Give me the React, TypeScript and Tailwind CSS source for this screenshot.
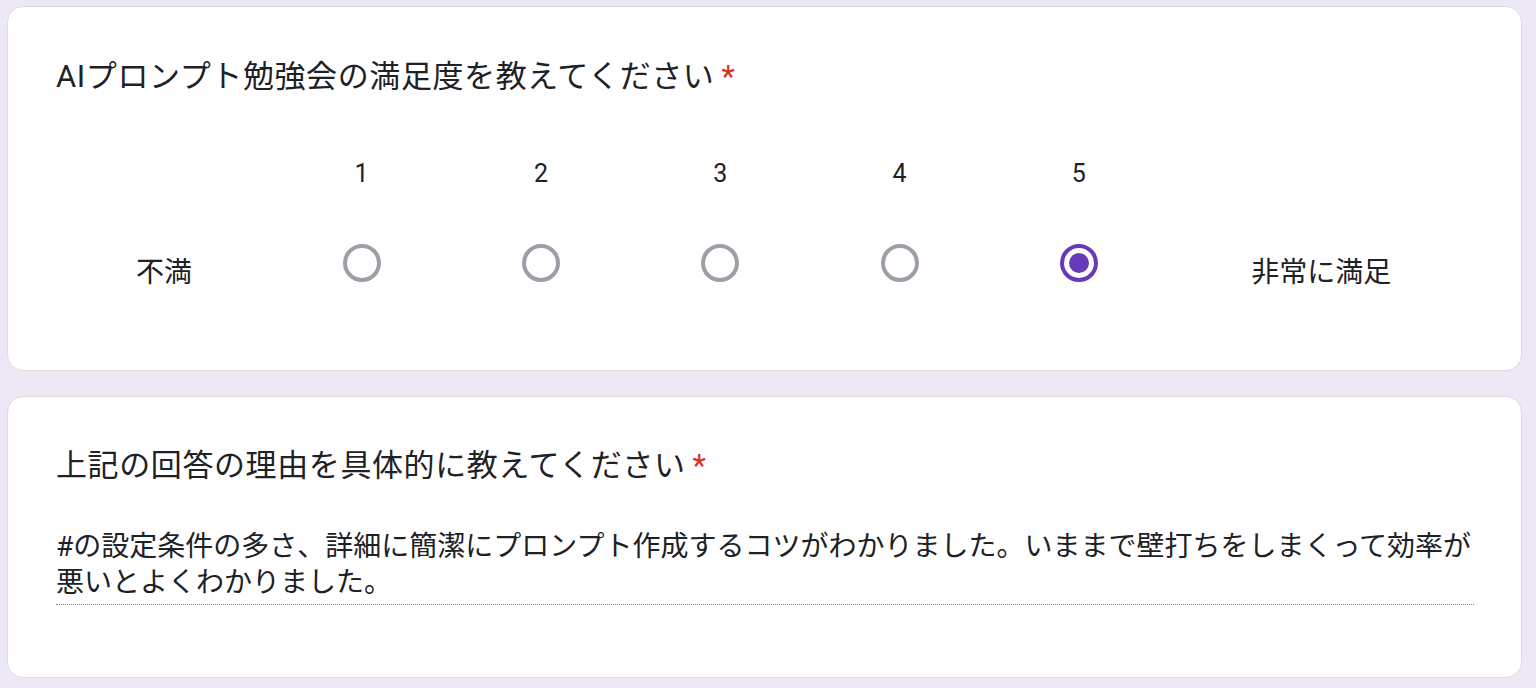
import React from 'react';

const FONT = '"Roboto", "Noto Sans CJK JP", "Noto Sans", sans-serif';

const Radio: React.FC<{ checked?: boolean }> = ({ checked }) =>
  checked ? (
    <div className="w-[38px] h-[38px] rounded-full border-[4px] border-[#673ab7] flex items-center justify-center">
      <div className="w-[20px] h-[20px] rounded-full bg-[#673ab7]" />
    </div>
  ) : (
    <div className="w-[38px] h-[38px] rounded-full border-[4px] border-[#9aa0a6]" />
  );

const Card: React.FC<{ children: React.ReactNode; className?: string }> = ({ children, className }) => (
  <div className={`bg-white border border-[#dadce0] rounded-[16px] pl-[48px] pr-[47px] ${className ?? ''}`}>
    {children}
  </div>
);

export default function App() {
  const values = [1, 2, 3, 4, 5];
  return (
    <div
      className="min-h-[688px] w-full bg-[#ede7f6] pt-[6px] pl-[7px] pr-[14px] flex flex-col gap-[25px]"
      style={{ fontFamily: FONT }}
    >
      {/* scale question */}
      <Card className="pt-[50px] pb-[83px]">
        <h2 className="text-[31px] leading-[40px] tracking-[0.6px] text-[#202124]">
          AIプロンプト勉強会の満足度を教えてください
          <span className="text-[#d93025] ml-[7px]">*</span>
        </h2>
        <div className="mt-[63px] grid grid-cols-[216px_repeat(5,179.3px)_1fr] text-[#202124]">
          <div />
          {values.map(v => (
            <div key={v} className="text-center text-[25px] leading-[28px]">{v}</div>
          ))}
          <div />
          <div className="h-[48px] mt-[51px] pt-[20px] flex items-center justify-center text-[28px]">不満</div>
          {values.map(v => (
            <div key={v} className="h-[48px] mt-[51px] flex items-center justify-center">
              <Radio checked={v === 5} />
            </div>
          ))}
          <div className="h-[48px] mt-[51px] pt-[20px] flex items-center justify-center text-[28px]">非常に満足</div>
        </div>
      </Card>

      {/* free text question */}
      <Card className="pt-[49px] pb-[72px]">
        <h2 className="text-[31px] leading-[40px] tracking-[0.6px] text-[#202124]">
          上記の回答の理由を具体的に教えてください
          <span className="text-[#d93025] ml-[7px]">*</span>
        </h2>
        <div className="mt-[43px] pb-[3px] border-b border-dotted border-[#80868b] text-[28px] leading-[36px] text-[#202124]">
          #の設定条件の多さ、詳細に簡潔にプロンプト作成するコツがわかりました。いままで壁打ちをしまくって効率が悪いとよくわかりました。
        </div>
      </Card>
    </div>
  );
}
